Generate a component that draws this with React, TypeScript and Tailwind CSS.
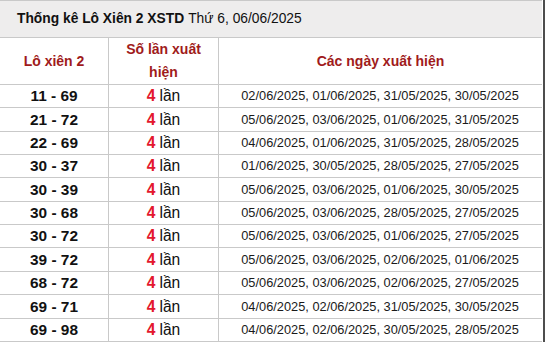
import React from "react";

const rows: { pair: string; dates: string; h: string }[] = [
  { pair: "11 - 69", dates: "02/06/2025, 01/06/2025, 31/05/2025, 30/05/2025", h: "h-[23px]" },
  { pair: "21 - 72", dates: "05/06/2025, 03/06/2025, 01/06/2025, 31/05/2025", h: "h-[24px]" },
  { pair: "22 - 69", dates: "04/06/2025, 01/06/2025, 31/05/2025, 28/05/2025", h: "h-[23px]" },
  { pair: "30 - 37", dates: "01/06/2025, 30/05/2025, 28/05/2025, 27/05/2025", h: "h-[23px]" },
  { pair: "30 - 39", dates: "05/06/2025, 03/06/2025, 01/06/2025, 30/05/2025", h: "h-[24px]" },
  { pair: "30 - 68", dates: "05/06/2025, 03/06/2025, 28/05/2025, 27/05/2025", h: "h-[23px]" },
  { pair: "30 - 72", dates: "05/06/2025, 03/06/2025, 01/06/2025, 27/05/2025", h: "h-[23px]" },
  { pair: "39 - 72", dates: "05/06/2025, 03/06/2025, 02/06/2025, 01/06/2025", h: "h-[24px]" },
  { pair: "68 - 72", dates: "05/06/2025, 03/06/2025, 02/06/2025, 27/05/2025", h: "h-[23px]" },
  { pair: "69 - 71", dates: "04/06/2025, 02/06/2025, 31/05/2025, 30/05/2025", h: "h-[24px]" },
  { pair: "69 - 98", dates: "04/06/2025, 02/06/2025, 30/05/2025, 28/05/2025", h: "h-[23px]" },
];

export default function App() {
  return (
    <div
      className="w-[545px] h-[342px] bg-white overflow-hidden border-r-2 border-[#4d4d4d]"
      style={{ fontFamily: '"Liberation Sans", Arial, sans-serif' }}
    >
      <div className="border-r border-white">
        <div className="h-[38px] bg-[#eeeded] border-y border-[#c9c9c9] flex items-center pl-[17px] text-[13.8px] text-[#111]">
          <span className="font-bold">Thống kê Lô Xiên 2 XSTD</span>
          <span className="ml-[4px]">Thứ 6, 06/06/2025</span>
        </div>
        <div className="h-[47px] flex border-b border-[#c9c9c9] text-[14px] font-bold text-[#a01b1b]">
          <div className="w-[109px] border-r border-[#c9c9c9] flex items-center justify-center">
            Lô xiên 2
          </div>
          <div className="w-[110px] border-r border-[#c9c9c9] flex items-center justify-center text-center px-[10px] leading-[23px]">
            Số lần xuất hiện
          </div>
          <div className="flex-1 flex items-center justify-center">Các ngày xuất hiện</div>
        </div>
        {rows.map((r) => (
          <div key={r.pair} className={`${r.h} flex border-b border-[#c9c9c9]`}>
            <div className="w-[109px] border-r border-[#c9c9c9] flex items-center justify-center text-[15.4px] font-bold text-[#111]">
              {r.pair}
            </div>
            <div className="w-[110px] border-r border-[#c9c9c9] flex items-center justify-center text-[15.6px] text-[#111]">
              <span className="font-bold text-[#e3172d]">4</span>
              <span className="ml-[4px]">lần</span>
            </div>
            <div className="flex-1 flex items-center justify-center text-[12.8px] text-[#1a1a1a] pr-[1px]">
              {r.dates}
            </div>
          </div>
        ))}
      </div>
    </div>
  );
}
